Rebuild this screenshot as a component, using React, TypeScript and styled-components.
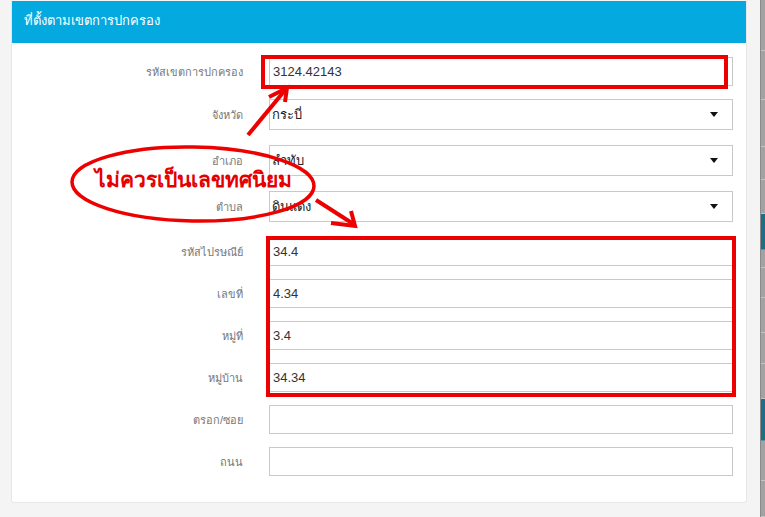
import React from "react";
import styled, { createGlobalStyle } from "styled-components";

const GlobalStyle = createGlobalStyle`
  html, body { margin: 0; padding: 0; }
  body {
    background: #f4f4f4;
    font-family: "Liberation Sans", "Noto Sans", "DejaVu Sans", sans-serif;
    width: 765px;
    height: 517px;
    overflow: hidden;
  }
`;

const Page = styled.div`
  position: relative;
  display: flex;
  width: 765px;
  height: 517px;
`;

const Main = styled.main`
  flex: 0 0 760px;
  padding: 1px 13px 0 11px;
  box-sizing: border-box;
`;

const Panel = styled.section`
  background: #ffffff;
  border: 1px solid #e7e7e7;
  border-top: none;
  border-radius: 0 0 3px 3px;
`;

const PanelHeader = styled.header`
  height: 42px;
  background: #03a9df;
  color: #ffffff;
  font-size: 13px;
  line-height: 40px;
  padding-left: 12px;
`;

const PanelBody = styled.div`
  display: flex;
  flex-direction: column;
  padding: 14px 13px 26px 0;
`;

const FormRow = styled.div<{ $select?: boolean }>`
  display: grid;
  grid-template-columns: 231px 1fr;
  column-gap: 26px;
  align-items: center;
  height: ${(p) => (p.$select ? "31px" : "29px")};
  margin-bottom: ${(p) => (p.$select ? "15px" : "13px")};
  &:last-child { margin-bottom: 0; }
`;

const Label = styled.label`
  text-align: right;
  font-size: 11px;
  color: #777777;
`;

const TextBox = styled.input`
  box-sizing: border-box;
  height: 100%;
  width: 100%;
  border: 1px solid #c9c9c9;
  background: #fff;
  padding: 0 3px;
  font-family: inherit;
  font-size: 13px;
  color: #333333;
  outline: none;
`;

const SelectBox = styled.div`
  box-sizing: border-box;
  height: 100%;
  display: flex;
  align-items: center;
  justify-content: space-between;
  border: 1px solid #c9c9c9;
  padding: 0 14px 0 2px;
  font-size: 13px;
  color: #222222;
`;

const Caret = styled.span`
  width: 0;
  height: 0;
  border-left: 4px solid transparent;
  border-right: 4px solid transparent;
  border-top: 5px solid #111;
`;

const Strip = styled.aside`
  flex: 0 0 5px;
  display: flex;
  flex-direction: column;
  background: #9d9d9d;
  border-left: 1px solid #8a8a8a;
  box-sizing: border-box;
`;

const StripCell = styled.div<{ $h: number; $teal?: boolean }>`
  height: ${(p) => p.$h}px;
  flex: 0 0 auto;
  background: ${(p) => (p.$teal ? "#1f6e88" : "#a2a2a2")};
  border-bottom: 1px solid ${(p) => (p.$teal ? "#4f95ad" : "#c4c4c4")};
  box-sizing: border-box;
`;

const Overlay = styled.svg`
  position: absolute;
  left: 0;
  top: 0;
  pointer-events: none;
`;

const Note = styled.div`
  position: absolute;
  left: 95px;
  top: 167px;
  font-size: 21px;
  line-height: 26px;
  font-weight: bold;
  color: #e50000;
  white-space: nowrap;
  text-shadow: 0 0 2px #fff, 0 0 3px #fff;
`;

type Field = { label: string; value: string; select?: boolean };

const fields: Field[] = [
  { label: "รหัสเขตการปกครอง", value: "3124.42143" },
  { label: "จังหวัด", value: "กระบี่", select: true },
  { label: "อำเภอ", value: "ลำทับ", select: true },
  { label: "ตำบล", value: "ดินแดง", select: true },
  { label: "รหัสไปรษณีย์", value: "34.4" },
  { label: "เลขที่", value: "4.34" },
  { label: "หมู่ที่", value: "3.4" },
  { label: "หมู่บ้าน", value: "34.34" },
  { label: "ตรอก/ซอย", value: "" },
  { label: "ถนน", value: "" },
];

const stripCells: { h: number; teal?: boolean }[] = [
  { h: 51 },
  { h: 49 },
  { h: 47 },
  { h: 33 },
  { h: 34 },
  { h: 36, teal: true },
  { h: 18 },
  { h: 30 },
  { h: 35 },
  { h: 31 },
  { h: 35 },
  { h: 42, teal: true },
  { h: 40 },
  { h: 36 },
];

export default function App() {
  const red = "#ec0000";
  return (
    <>
      <GlobalStyle />
      <Page>
        <Main>
          <Panel>
            <PanelHeader>ที่ตั้งตามเขตการปกครอง</PanelHeader>
            <PanelBody>
              {fields.map((f) => (
                <FormRow key={f.label} $select={f.select}>
                  <Label>{f.label}</Label>
                  {f.select ? (
                    <SelectBox>
                      <span>{f.value}</span>
                      <Caret />
                    </SelectBox>
                  ) : (
                    <TextBox readOnly value={f.value} />
                  )}
                </FormRow>
              ))}
            </PanelBody>
          </Panel>
        </Main>
        <Strip>
          {stripCells.map((c, i) => (
            <StripCell key={i} $h={c.h} $teal={c.teal} />
          ))}
        </Strip>
        <Overlay width="765" height="517" viewBox="0 0 765 517">
          <g fill="none" stroke={red} strokeWidth="4" strokeLinecap="square">
            <rect x="263" y="57" width="463" height="30" />
            <rect x="268" y="238" width="466" height="157" />
          </g>
          <g fill="none" stroke={red} strokeWidth="4" strokeLinecap="butt">
            <line x1="248" y1="135" x2="286" y2="89" />
            <polyline points="269,97 287,88 285,102" />
            <ellipse cx="193" cy="184" rx="121" ry="37" strokeWidth="3.5" transform="rotate(1 193 184)" />
            <line x1="316" y1="200" x2="355" y2="225" />
            <polyline points="351,211 355,226 331,223" />
          </g>
        </Overlay>
        <Note>ไม่ควรเป็นเลขทศนิยม</Note>
      </Page>
    </>
  );
}
